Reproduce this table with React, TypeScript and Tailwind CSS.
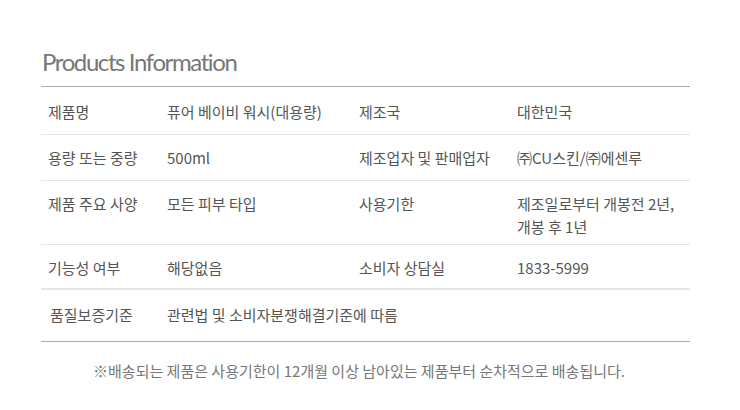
const rows = [
  { h: "h-[48px]", pt: "pt-[13px]", a: "제품명", b: "퓨어 베이비 워시(대용량)", c: "제조국", d: "대한민국" },
  { h: "h-[46px]", pt: "pt-[11px]", a: "용량 또는 중량", b: "500ml", c: "제조업자 및 판매업자", d: "㈜CU스킨/㈜에센루" },
  { h: "h-[64px]", pt: "pt-[11px]", a: "제품 주요 사양", b: "모든 피부 타입", c: "사용기한", d: "제조일로부터 개봉전 2년,\n개봉 후 1년" },
  { h: "h-[44px]", pt: "pt-[11px]", a: "기능성 여부", b: "해당없음", c: "소비자 상담실", d: "1833-5999" },
];

export default function App() {
  return (
    <div className="w-[740px] h-[410px] bg-white font-['Noto_Sans_CJK_KR',sans-serif] text-[#555]">
      <div className="pl-[41px] pr-[50px] pt-[44px]">
        {/* 타이틀 */}
        <h2 className="pl-[1px] h-[42px] font-['Lato','Noto_Sans_CJK_KR',sans-serif] text-[24px] leading-[36px] tracking-[-1.4px] text-[#777]">
          Products Information
        </h2>

        {/* 정보 테이블 */}
        <div className="border-t border-b border-[#aaa] text-[15px] leading-[23px]">
          {rows.map((r, i) => (
            <div key={i} className={`flex ${r.h} ${r.pt} border-b border-[#e6e6e6] last:border-b-0`}>
              <div className="w-[119px] pl-[7px]">{r.a}</div>
              <div className="w-[192px] pl-[7px]">{r.b}</div>
              <div className="w-[158px] pl-[7px]">{r.c}</div>
              <div className="flex-1 pl-[7px] whitespace-pre-line">{r.d}</div>
            </div>
          ))}
          <div className="flex h-[52px] pt-[13px] border-t border-[#e6e6e6]">
            <div className="w-[119px] pl-[9px]">품질보증기준</div>
            <div className="flex-1 pl-[7px]">관련법 및 소비자분쟁해결기준에 따름</div>
          </div>
        </div>

        {/* 안내 문구 */}
        <p className="pt-[17px] text-center text-[15px] leading-[23px] text-[#777] pr-[13px]">
          ※배송되는 제품은 사용기한이 12개월 이상 남아있는 제품부터 순차적으로 배송됩니다.
        </p>
      </div>
    </div>
  );
}
